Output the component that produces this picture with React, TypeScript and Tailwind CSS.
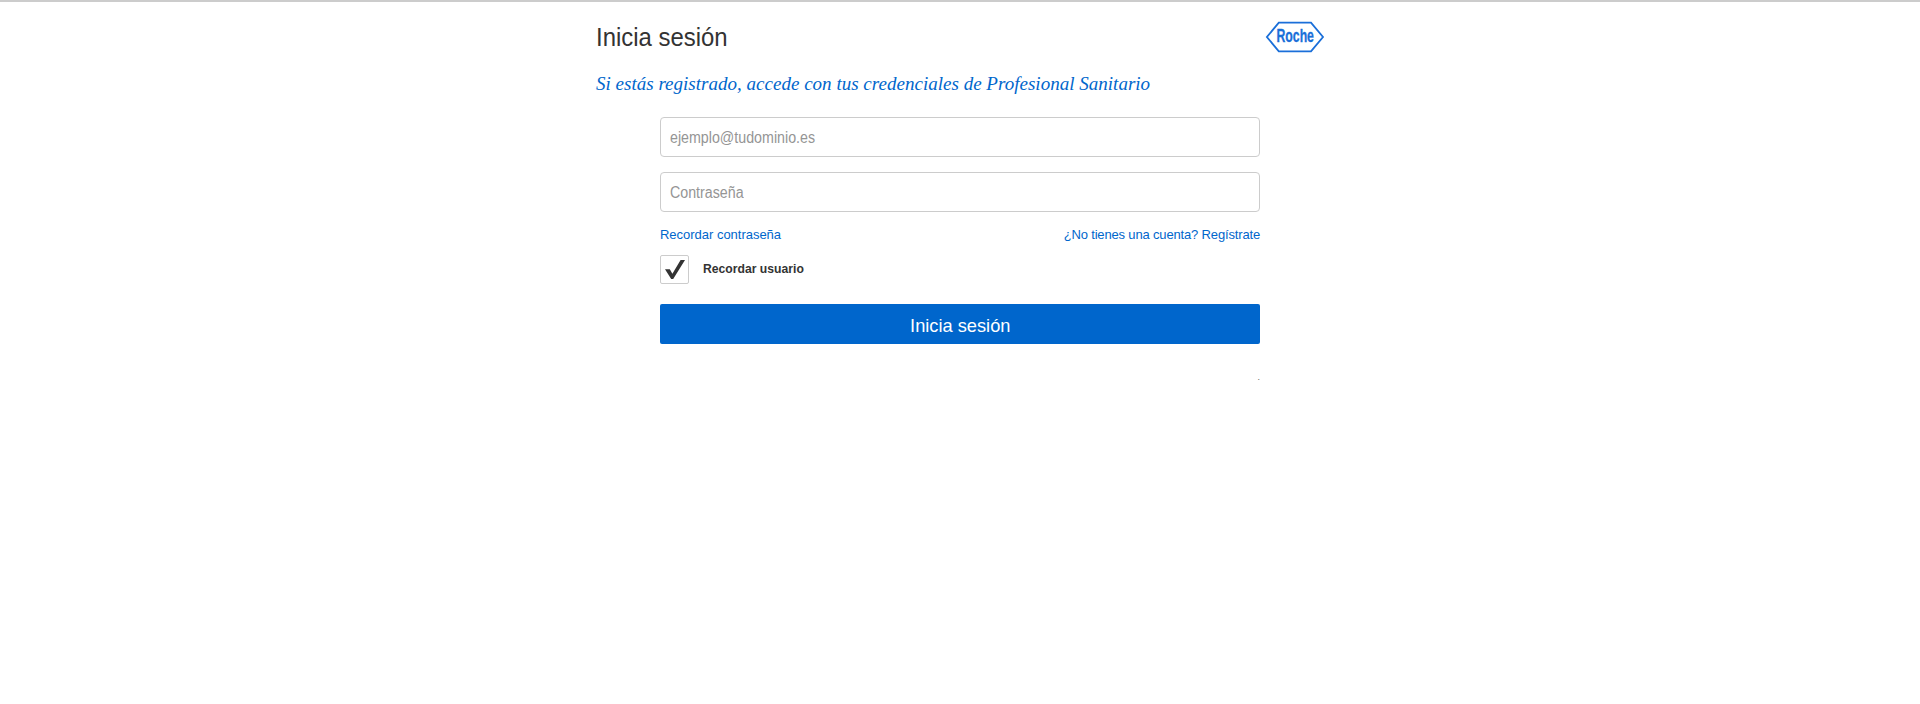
import React, { useState } from "react";

function RocheLogo() {
  return (
    <svg width="58" height="32" viewBox="0 0 58 32" role="img" aria-label="Roche" className="block overflow-visible">
      <path d="M12.8 1.6H45L57 16L45 30.4H12.8L0.9 16Z" fill="none" stroke="#1a6fd9" strokeWidth="1.8" />
      <text
        transform="translate(10.5 21.1) scale(0.7 1)"
        strokeWidth="0.3"
        className="fill-[#1a6fd9] stroke-[#1a6fd9] text-[17.5px] font-bold [font-family:'Liberation_Sans',sans-serif]"
      >
        Roche
      </text>
    </svg>
  );
}

function Field({ type, placeholder }: { type: string; placeholder: string }) {
  return (
    <label className="flex h-10 w-full overflow-hidden rounded-[4px] border border-[#ccc] bg-white pl-[9px]">
      <input
        type={type}
        placeholder={placeholder}
        className="h-full w-full origin-left scale-x-[0.89] bg-transparent pt-[2px] text-[16px] text-[#333] outline-none placeholder:text-[#959595]"
      />
    </label>
  );
}

export default function App() {
  const [remember, setRemember] = useState(true);
  return (
    <main className="min-h-[704px] w-full border-t-2 border-[#ccc] bg-white text-[#333] [font-family:'Liberation_Sans',Arial,sans-serif]">
      <div className="mx-auto w-[728px]">
        <header className="flex h-[61px] justify-between pt-[19px]">
          <h1 className="origin-left scale-x-[0.92] text-[26px] leading-[32px]">Inicia sesión</h1>
          <RocheLogo />
        </header>
        <p className="h-[54px] whitespace-nowrap text-[19px] leading-[42px] tracking-[0.015px] text-[#06c] italic [font-family:'Liberation_Serif',serif]">
          Si estás registrado, accede con tus credenciales de Profesional Sanitario
        </p>
        <form className="mx-auto w-[600px]" onSubmit={(e) => e.preventDefault()}>
          <div className="flex flex-col gap-[15px]">
            <Field type="email" placeholder="ejemplo@tudominio.es" />
            <Field type="password" placeholder="Contraseña" />
          </div>
          <div className="mt-[14px] flex justify-between text-[13px] leading-[18px] text-[#06c]">
            <a href="#recordar" className="tracking-[-0.02px]">Recordar contraseña</a>
            <a href="#registro" className="tracking-[-0.16px]">¿No tienes una cuenta? Regístrate</a>
          </div>
          <label className="mt-[11px] flex h-[29px]">
            <input type="checkbox" checked={remember} onChange={() => setRemember(!remember)} className="sr-only" />
            <span className="h-[29px] w-[29px] rounded-[2px] border border-[#ccc]">
              {remember && (
                <svg width="27" height="27" viewBox="0 0 27 27" className="block fill-[#333]">
                  <path d="M4 13.2H8.8L11.4 17.8L19.6 4H24L12.2 23H10.2Z" />
                </svg>
              )}
            </span>
            <span className="ml-[14px] origin-left scale-x-[0.937] text-[13px] leading-[27px] font-bold">Recordar usuario</span>
          </label>
          <button type="submit" className="mt-5 flex h-10 w-full items-center justify-center rounded-[2px] bg-[#06c] text-[19px] text-white">
            <span className="scale-x-[0.96] pt-[4px] leading-[22px]">Inicia sesión</span>
          </button>
          <p className="mt-[27px] text-right text-[9px] leading-[12px] text-[#666]">.</p>
        </form>
      </div>
    </main>
  );
}
